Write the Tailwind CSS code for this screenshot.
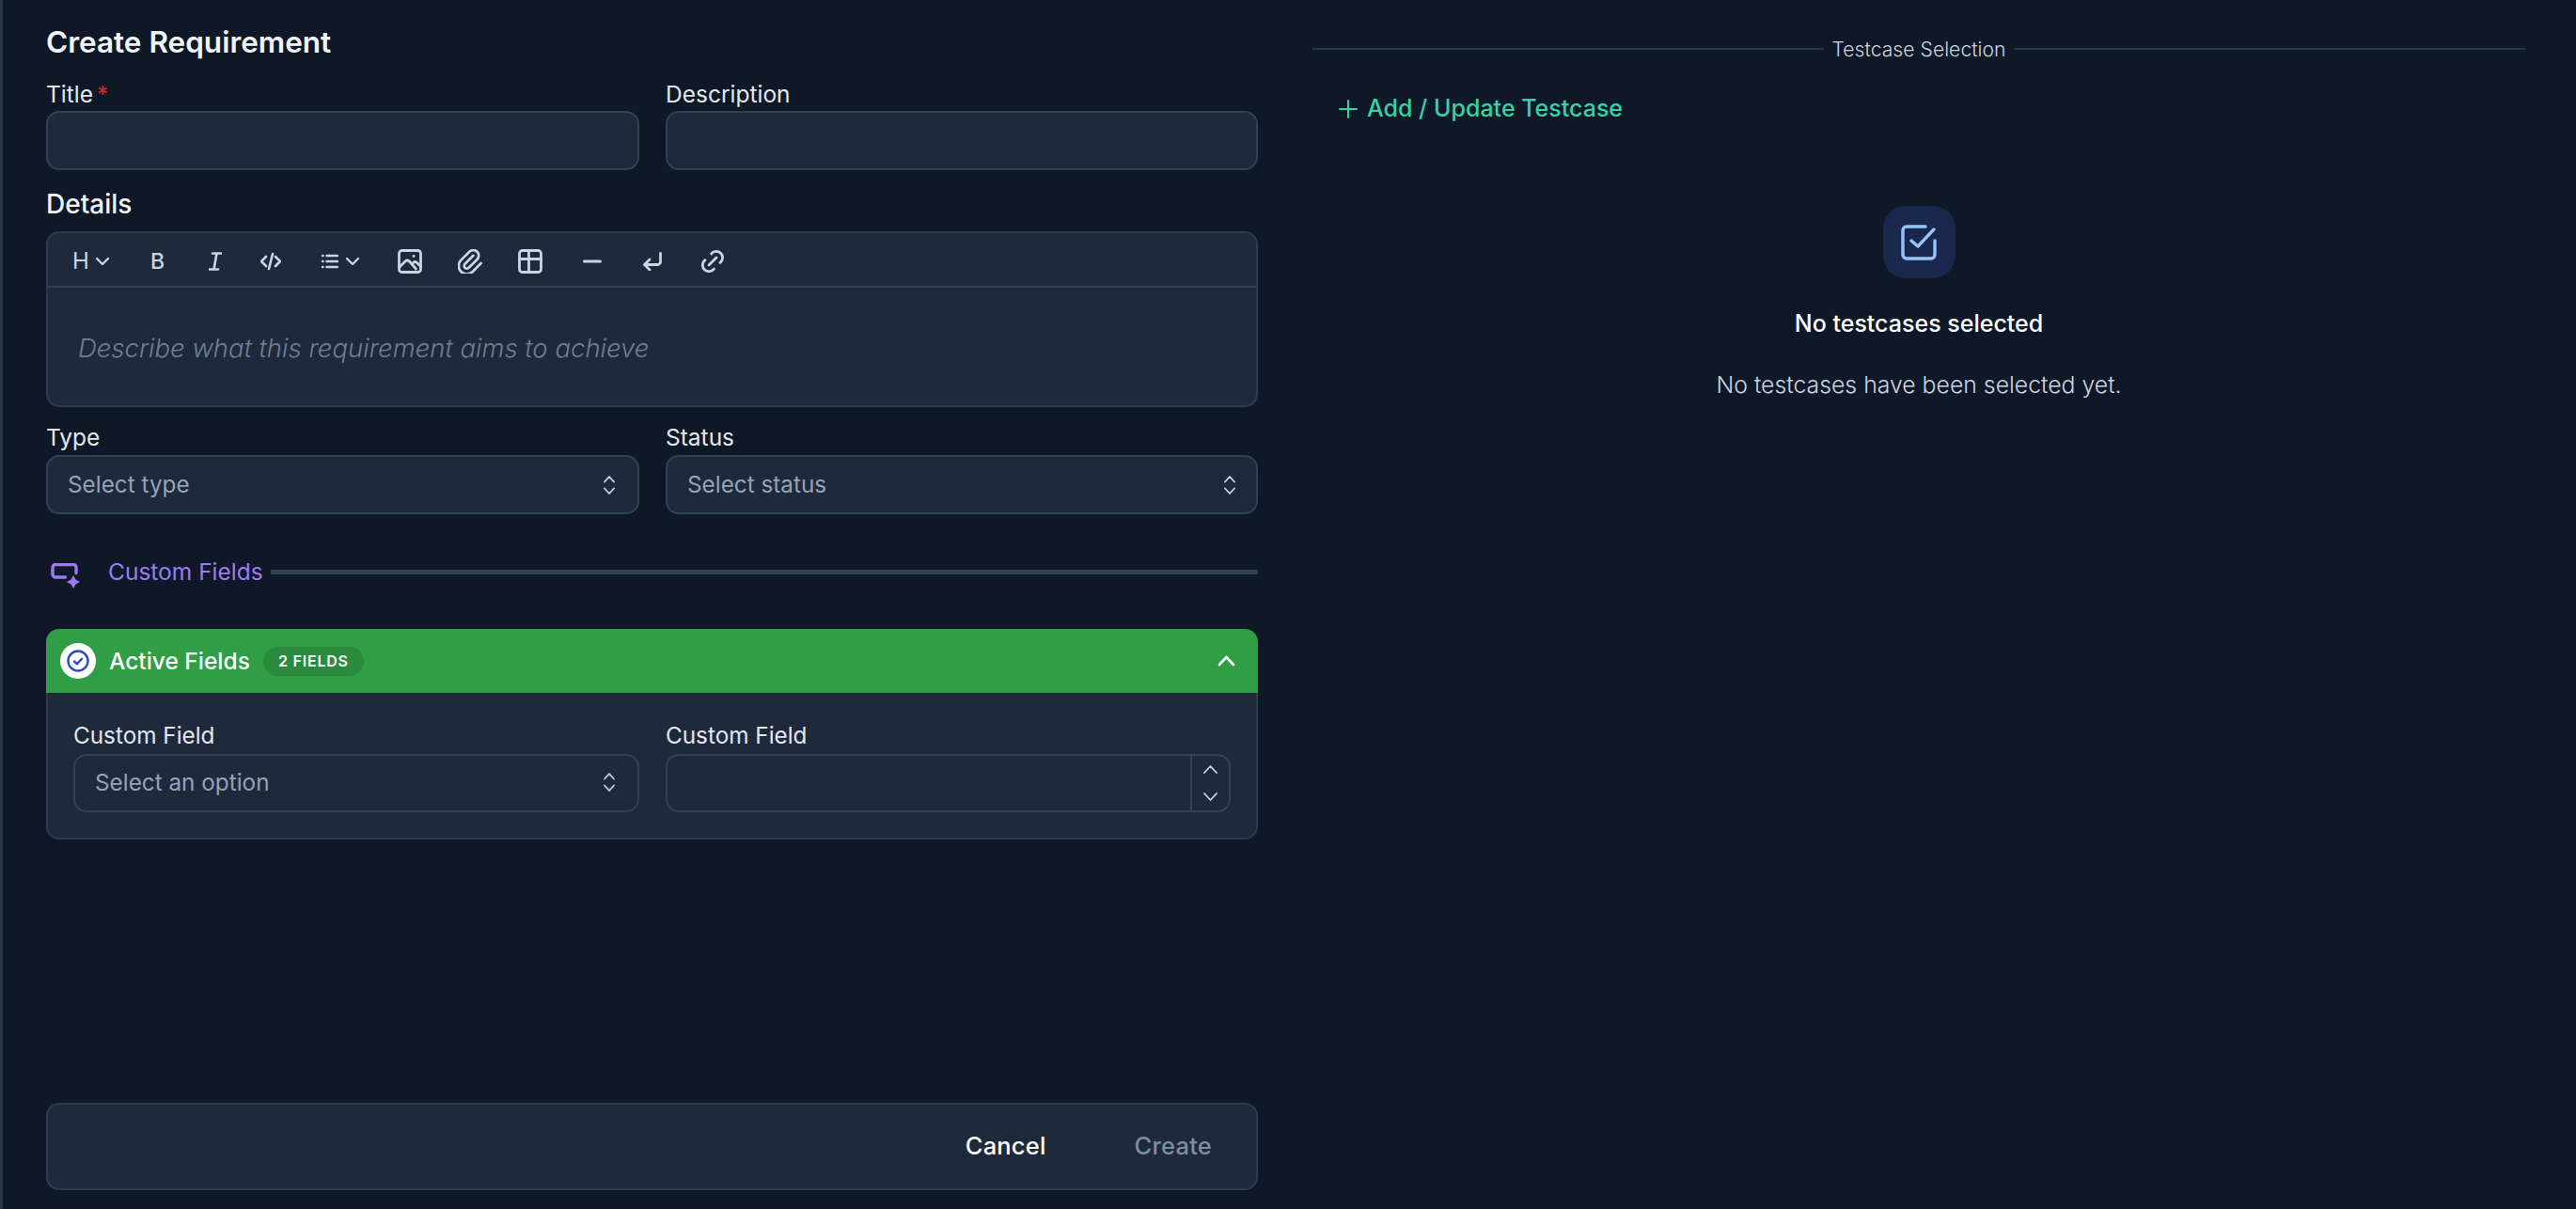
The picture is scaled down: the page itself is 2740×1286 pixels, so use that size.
<!DOCTYPE html>
<html lang="en">
<head>
    <meta charset="UTF-8">
    <meta name="viewport" content="width=device-width, initial-scale=1.0">
    <title>Create Requirement</title>
    <script src="https://cdn.jsdelivr.net/npm/@tailwindcss/browser@4"></script>
</head>
<body class="bg-[#0f1826] text-white h-screen overflow-hidden font-['Inter',sans-serif]">
    <div class="flex h-[1286px] border-l-[3px] border-[#2a3648]">
        <!-- form -->
        <div class="w-[1335px] pl-[46px] pt-[27px] pb-[20px] flex flex-col shrink-0">
            <h1 class="h-[36px] leading-[36px] text-[31.5px] font-semibold text-[#f1f5f9]">Create Requirement</h1>

            <div class="grid grid-cols-[631px_630px] gap-x-[28px] mt-[24px]">
                <div>
                    <label class="block h-[24px] leading-[26px] text-[24.5px] text-[#e2e8f0]">Title <span class="text-[#dc2626] -ml-[3px]">*</span></label>
                    <div class="mt-[7px] h-[63px] rounded-[14px] bg-[#1e293b] border-2 border-[#334155]"></div>
                </div>
                <div>
                    <label class="block h-[24px] leading-[26px] text-[24.5px] text-[#e2e8f0]">Description</label>
                    <div class="mt-[7px] h-[63px] rounded-[14px] bg-[#1e293b] border-2 border-[#334155]"></div>
                </div>
            </div>

            <label class="block mt-[23px] h-[24px] leading-[26px] text-[28px] font-medium text-[#f1f5f9]">Details</label>
            <div class="mt-[18px] h-[187px] rounded-[14px] bg-[#1e293b] border-2 border-[#2e3a4e]">
                <div class="h-[58px] pt-[4px] border-b-2 border-[#334155] text-[#cbd5e1]">
                    <div class="flex items-center h-full pl-[26px]">
                        <span class="w-[15px] text-[24px] leading-none">H</span>
                        <svg class="ml-[9px] w-[16px] h-[10px]" viewBox="0 0 16 10" fill="none" stroke="currentColor" stroke-width="2.4" stroke-linecap="round" stroke-linejoin="round"><path d="M2 2l6 6 6-6"/></svg>
                        <span class="ml-[43px] w-[14px] text-[23px] font-medium leading-none">B</span>
                        <svg class="ml-[48px] w-[14px] h-[20px]" viewBox="0 0 14 20" fill="none" stroke="currentColor" stroke-width="2.6" stroke-linecap="round"><path d="M4 1.500h9M1 18.500h9M8.500 1.500l-3 17"/></svg>
                        <svg class="ml-[41px] w-[22px] h-[20px]" viewBox="0 0 22 20" fill="none" stroke="currentColor" stroke-width="2.6" stroke-linecap="round" stroke-linejoin="round"><path d="M6 5l-5 5 5 5M16 5l5 5-5 5M13 2l-4 16"/></svg>
                        <svg class="ml-[43px] w-[18px] h-[16px]" viewBox="0 0 18 16" fill="none" stroke="currentColor" stroke-width="2.4" stroke-linecap="round"><path d="M5.500 2H17M5.500 8H17M5.500 14H17M1 2h.6M1 8h.6M1 14h.6"/></svg>
                        <svg class="ml-[7px] w-[16px] h-[10px]" viewBox="0 0 16 10" fill="none" stroke="currentColor" stroke-width="2.4" stroke-linecap="round" stroke-linejoin="round"><path d="M2 2l6 6 6-6"/></svg>
                        <svg class="ml-[40px] w-[26px] h-[26px]" viewBox="0 0 26 26" fill="none" stroke="currentColor" stroke-width="2.8" stroke-linecap="round" stroke-linejoin="round"><rect x="1.500" y="1.500" width="23" height="23" rx="3"/><path d="M2 19l6-6c1.500-1.300 3-1.300 4.500 0l7 8M15 16l1.500-1.500c1.300-1.200 2.700-1.200 4 0l3.500 3.500M17 7.500h.1"/></svg>
                        <svg class="ml-[38px] w-[26px] h-[26px]" viewBox="3 2 19 19" fill="none" stroke="currentColor" stroke-width="2" stroke-linecap="round" stroke-linejoin="round"><path d="M15 7l-6.500 6.500a1.500 1.500 0 0 0 3 3l6.500-6.500a3 3 0 0 0-6-6l-6.500 6.500a4.500 4.500 0 0 0 9 9l6.500-6.500"/></svg>
                        <svg class="ml-[38px] w-[26px] h-[26px]" viewBox="0 0 26 26" fill="none" stroke="currentColor" stroke-width="2.800" stroke-linecap="round" stroke-linejoin="round"><rect x="1.500" y="1.500" width="23" height="23" rx="3"/><path d="M1.500 10.500h23M11.500 1.500v23"/></svg>
                        <svg class="ml-[43px] w-[20px] h-[6px]" viewBox="0 0 20 6" fill="none" stroke="currentColor" stroke-width="3" stroke-linecap="round"><path d="M1.500 3h17"/></svg>
                        <svg class="ml-[44px] w-[20px] h-[20px]" viewBox="0 0 20 20" fill="none" stroke="currentColor" stroke-width="2.800" stroke-linecap="round" stroke-linejoin="round"><path d="M18.500 1.500v9a3 3 0 0 1-3 3H2M7 8l-5.500 5.500L7 19"/></svg>
                        <svg class="ml-[42px] w-[24px] h-[24px]" viewBox="3 3 18 18" fill="none" stroke="currentColor" stroke-width="2.100" stroke-linecap="round" stroke-linejoin="round"><path d="M9 15l6-6M11 6l.46-.54a5 5 0 0 1 7.070 7.070l-.53.47M13 18l-.4.530a5.070 5.070 0 0 1-7.130 0 4.970 4.970 0 0 1 0-7.070l.52-.46"/></svg>
                    </div>
                </div>
                <div class="h-[125px] pt-[5px] flex items-center pl-[32px] text-[27.500px] italic font-light text-[#6f7e93]">Describe what this requirement aims to achieve</div>
            </div>

            <div class="grid grid-cols-[631px_630px] gap-x-[28px] mt-[20px]">
                <div>
                    <label class="block h-[24px] leading-[24px] text-[24.5px] text-[#e2e8f0]">Type</label>
                    <div class="mt-[7px] h-[63px] rounded-[14px] bg-[#1e293b] border-2 border-[#334155] flex items-center justify-between pl-[21px] pr-[24px] text-[24.3px] text-[#94a3b8]">
                        <span>Select type</span>
                        <svg class="w-[12px] h-[20px] text-[#cbd5e1]" viewBox="0 0 12 20" fill="none" stroke="currentColor" stroke-width="1.800" stroke-linecap="round" stroke-linejoin="round"><path d="M1 6.500L6 1l5 5.500M1 13.500L6 19l5-5.500"/></svg>
                    </div>
                </div>
                <div>
                    <label class="block h-[24px] leading-[24px] text-[24.5px] text-[#e2e8f0]">Status</label>
                    <div class="mt-[7px] h-[63px] rounded-[14px] bg-[#1e293b] border-2 border-[#334155] flex items-center justify-between pl-[21px] pr-[22px] text-[24.3px] text-[#94a3b8]">
                        <span>Select status</span>
                        <svg class="w-[12px] h-[20px] text-[#cbd5e1]" viewBox="0 0 12 20" fill="none" stroke="currentColor" stroke-width="1.800" stroke-linecap="round" stroke-linejoin="round"><path d="M1 6.500L6 1l5 5.500M1 13.500L6 19l5-5.500"/></svg>
                    </div>
                </div>
            </div>

            <!-- custom fields divider -->
            <div class="mt-[46px] h-[30px] flex items-center">
                <svg class="ml-[5px] mt-[9px] w-[32px] h-[28px] text-[#9b7cf0]" viewBox="0 0 32 28" fill="none" stroke="currentColor" stroke-width="3.400" stroke-linecap="round" stroke-linejoin="round"><path d="M27 10.500V4.500a3 3 0 0 0-3-3H5a3 3 0 0 0-3 3v7.500a3 3 0 0 0 3 3h10.500"/><path d="M24 13l2.500 4.500L31 20l-4.500 2.500L24 27l-2.500-4.500L17 20l4.500-2.500z" fill="currentColor" stroke="none"/></svg>
                <span class="ml-[29px] text-[24.5px] text-[#9b7cf0]">Custom Fields</span>
                <div class="ml-[8px] flex-1 h-[5px] bg-[#334155]"></div>
            </div>

            <!-- active fields card -->
            <div class="mt-[46px] h-[224px] rounded-[14px] bg-[#1e293b] border-2 border-t-0 border-[#2e3a4e]">
                <div class="h-[68px] -mx-[2px] rounded-t-[14px] bg-[#2f9e44] flex items-center pl-[15px] pr-[24px]">
                    <div class="w-[38px] h-[38px] rounded-full bg-white flex items-center justify-center">
                        <svg class="w-[24px] h-[24px] text-[#2b4bc4]" viewBox="0 0 24 24" fill="none" stroke="currentColor" stroke-width="2.400" stroke-linecap="round" stroke-linejoin="round"><circle cx="12" cy="12" r="10.500"/><path d="M8 12.500l3 2.800 5-5.500"/></svg>
                    </div>
                    <span class="ml-[14px] text-[24.5px] font-medium">Active Fields</span>
                    <span class="ml-[14px] h-[31px] px-[16px] rounded-full bg-[#2a8a3e] flex items-center text-[16px] font-semibold tracking-[0.8px]">2 FIELDS</span>
                    <svg class="ml-auto w-[19px] h-[12px]" viewBox="0 0 19 12" fill="none" stroke="currentColor" stroke-width="2.600" stroke-linecap="round" stroke-linejoin="round"><path d="M2 10l7.500-8 7.500 8"/></svg>
                </div>
                <div class="grid grid-cols-[602px_601px] gap-x-[28px] pl-[27px] pt-[33px]">
                    <div>
                        <label class="block h-[24px] leading-[25px] text-[24.300px] text-[#e2e8f0]">Custom Field</label>
                        <div class="mt-[8px] h-[62px] pb-[2px] rounded-[14px] border-2 border-[#334155] flex items-center justify-between pl-[21px] pr-[24px] text-[24.3px] text-[#94a3b8]">
                            <span>Select an option</span>
                            <svg class="w-[12px] h-[20px] text-[#cbd5e1]" viewBox="0 0 12 20" fill="none" stroke="currentColor" stroke-width="1.800" stroke-linecap="round" stroke-linejoin="round"><path d="M1 6.500L6 1l5 5.500M1 13.500L6 19l5-5.500"/></svg>
                        </div>
                    </div>
                    <div>
                        <label class="block h-[24px] leading-[25px] text-[24.300px] text-[#e2e8f0]">Custom Field</label>
                        <div class="mt-[8px] h-[62px] rounded-[14px] border-2 border-[#334155] flex justify-end">
                            <div class="w-[41px] border-l-2 border-[#334155] flex flex-col items-center justify-between py-[10px] text-[#cbd5e1]">
                                <svg class="w-[15px] h-[9px]" viewBox="0 0 15 9" fill="none" stroke="currentColor" stroke-width="1.800" stroke-linecap="round" stroke-linejoin="round"><path d="M1 8l6.500-7 6.500 7"/></svg>
                                <svg class="w-[15px] h-[9px]" viewBox="0 0 15 9" fill="none" stroke="currentColor" stroke-width="1.800" stroke-linecap="round" stroke-linejoin="round"><path d="M1 1l6.500 7 6.500-7"/></svg>
                            </div>
                        </div>
                    </div>
                </div>
            </div>

            <!-- footer -->
            <div class="mt-auto h-[93px] rounded-[14px] bg-[#1e293b] border-2 border-[#2e3a4e] flex items-center justify-end pr-[47px] text-[25.5px] font-medium tracking-[0.2px]">
                <span class="text-white">Cancel</span>
                <span class="ml-[94px] text-[#7f8ea3]">Create</span>
            </div>
        </div>

        <!-- testcases -->
        <div class="ml-[58px] w-[1290px] shrink-0 pt-[38px]">
            <div class="flex items-center h-[28px] gap-x-[8px]">
                <div class="flex-1 h-[2px] bg-[#2a3648]"></div>
                <span class="pt-[1px] text-[21.200px] font-light text-[#cbd5e1]">Testcase Selection</span>
                <div class="flex-1 h-[2px] bg-[#2a3648]"></div>
            </div>
            <div class="mt-[36px] ml-[28px] h-[28px] flex items-center text-[#35d3a5]">
                <svg class="w-[20px] h-[20px]" viewBox="0 0 20 20" fill="none" stroke="currentColor" stroke-width="2" stroke-linecap="round"><path d="M10 1v18M1 10h18"/></svg>
                <span class="ml-[10px] text-[25px] font-medium">Add / Update Testcase</span>
            </div>
            <div class="mt-[89px] flex flex-col items-center">
                <div class="w-[77px] h-[77px] rounded-[24px] bg-[#1a284d] flex items-center justify-center">
                    <svg class="w-[38px] h-[38px] text-[#93c5fd]" viewBox="0 0 38 38" fill="none" stroke="currentColor" stroke-width="3.400" stroke-linecap="round" stroke-linejoin="round"><path d="M36 17v15a4 4 0 0 1-4 4H6a4 4 0 0 1-4-4V6a4 4 0 0 1 4-4h20"/><path d="M11 17l7 6L35 5"/></svg>
                </div>
                <div class="mt-[33px] h-[30px] leading-[30px] text-[25px] font-medium text-white">No testcases selected</div>
                <div class="mt-[35px] h-[30px] leading-[30px] text-[24.800px] font-light text-[#cbd5e1]">No testcases have been selected yet.</div>
            </div>
        </div>
    </div>
</body>
</html>
